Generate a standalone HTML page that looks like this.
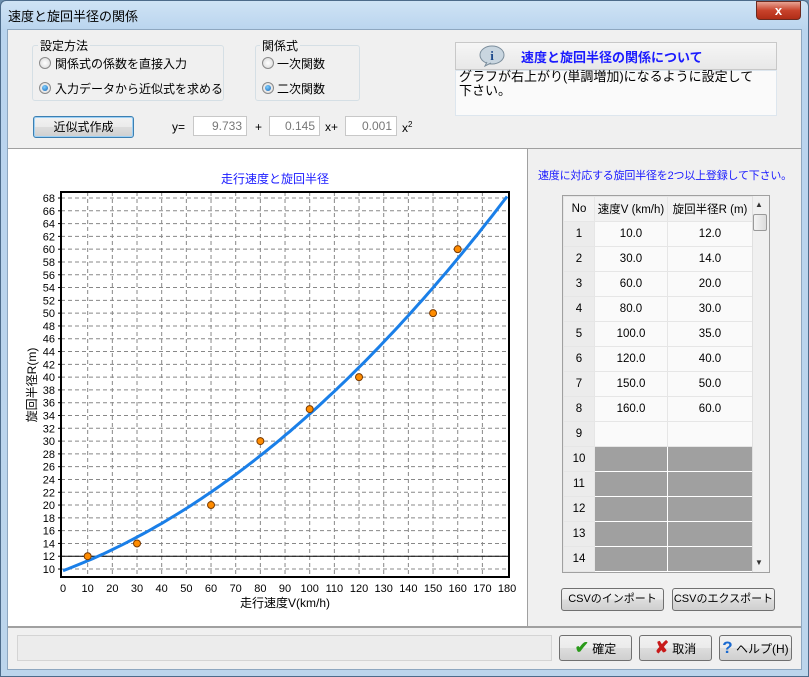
<!DOCTYPE html>
<html><head><meta charset="utf-8">
<style>
*{box-sizing:border-box;margin:0;padding:0}
body{width:809px;height:677px;overflow:hidden;background:#6d8fae;font-family:"Liberation Sans","Noto Sans CJK JP",sans-serif;font-size:12px;color:#000;position:relative}
.abs{position:absolute}
#win{left:0;top:0;width:809px;height:677px;background:linear-gradient(#cfe3f5,#b9d4ee 30px,#bcd5ec);border:1px solid #4d6b8a;border-radius:6px 6px 0 0}
#title{left:8px;top:6px;font-size:13px;color:#000}
#close{left:756px;top:1px;width:45px;height:19px;background:linear-gradient(#e8a394,#c8422b 50%,#b02d17);border:1px solid #6b2a20;border-radius:0 0 4px 4px;color:#fff;font-weight:bold;text-align:center;line-height:17px;font-size:13px}
#body{left:7px;top:29px;width:795px;height:641px;background:#f0f0f0;border:1px solid #8ea7c0}
.grp{border:1px solid #d5dfe5;border-radius:3px}
.lbl{font-size:12px}
.radio{width:12px;height:12px;border-radius:50%;border:1px solid #8a8a8a;background:radial-gradient(#fff,#d6d6d6)}
.radio.on::after{content:"";position:absolute;left:2px;top:2px;width:6px;height:6px;border-radius:50%;background:radial-gradient(circle at 40% 35%,#7fd0ff,#1663b5)}
.btn{border:1px solid #707070;border-radius:3px;background:linear-gradient(#f2f2f2,#ebebeb 50%,#dddddd 51%,#cfcfcf);text-align:center;font-size:12px}
.inp{background:#fff;border:1px solid #c8c8c8;text-align:right;color:#777;padding-right:4px;line-height:18px}
table{border-collapse:collapse}
td{height:25px;text-align:center;font-size:11.5px;border:1px solid #e6e6e6}
</style></head><body>
<div id="win" class="abs"></div>
<div id="title" class="abs">速度と旋回半径の関係</div>
<div id="close" class="abs">x</div>
<div id="body" class="abs"></div>

<div class="abs grp" style="left:32px;top:45px;width:192px;height:56px"></div>
<div class="abs lbl" style="left:38px;top:37px;background:#f0f0f0;padding:0 2px">設定方法</div>
<div class="abs radio" style="left:39px;top:57px"></div>
<div class="abs lbl" style="left:55px;top:55px">関係式の係数を直接入力</div>
<div class="abs radio on" style="left:39px;top:82px"></div>
<div class="abs lbl" style="left:55px;top:80px">入力データから近似式を求める</div>

<div class="abs grp" style="left:255px;top:45px;width:105px;height:56px"></div>
<div class="abs lbl" style="left:260px;top:37px;background:#f0f0f0;padding:0 2px">関係式</div>
<div class="abs radio" style="left:262px;top:57px"></div>
<div class="abs lbl" style="left:277px;top:55px">一次関数</div>
<div class="abs radio on" style="left:262px;top:82px"></div>
<div class="abs lbl" style="left:277px;top:80px">二次関数</div>

<div class="abs btn" style="left:33px;top:116px;width:101px;height:22px;line-height:20px;border-color:#3c7fb1;box-shadow:inset 0 0 0 1px #9cd0f5">近似式作成</div>
<div class="abs lbl" style="left:172px;top:120px">y=</div>
<div class="abs inp" style="left:193px;top:116px;width:54px;height:20px">9.733</div>
<div class="abs lbl" style="left:255px;top:120px">+</div>
<div class="abs inp" style="left:269px;top:116px;width:51px;height:20px">0.145</div>
<div class="abs lbl" style="left:325px;top:120px">x+</div>
<div class="abs inp" style="left:345px;top:116px;width:52px;height:20px">0.001</div>
<div class="abs lbl" style="left:402px;top:120px">x<sup style="font-size:8px">2</sup></div>

<div class="abs" style="left:455px;top:42px;width:322px;height:28px;background:linear-gradient(#f6f6f6,#e8e8e8);border:1px solid #c8c8c8"></div>
<svg class="abs" style="left:479px;top:45px" width="26" height="22"><ellipse cx="13" cy="10" rx="12" ry="9" fill="#c9d6e0" stroke="#7c8e9c"/><path d="M8 17 L6 21 L12 18" fill="#c9d6e0" stroke="#7c8e9c"/><text x="13" y="15" text-anchor="middle" font-size="13" font-weight="bold" fill="#1e4a8c" font-family="Liberation Serif">i</text></svg>
<div class="abs" style="left:521px;top:47px;color:#1a1aff;font-weight:bold;font-size:13px">速度と旋回半径の関係について</div>
<div class="abs" style="left:455px;top:70px;width:322px;height:46px;background:#fafafa;border:1px solid #dde6ee"></div>
<div class="abs" style="left:459px;top:70px;width:306px;font-size:13px;line-height:14px">グラフが右上がり(単調増加)になるように設定して下さい。</div>

<div class="abs" style="left:8px;top:148px;width:520px;height:479px;background:#fff;border-top:1px solid #a0a0a0;border-right:1px solid #a0a0a0"></div>
<div class="abs" style="left:528px;top:148px;width:273px;height:479px;background:#f0f0f0;border-top:1px solid #a0a0a0"></div>
<div class="abs" style="left:8px;top:626px;width:793px;height:2px;background:#a0a0a0"></div>

<svg id="ch" class="abs" style="left:0;top:0" width="530" height="626"></svg>

<div class="abs" style="left:538px;top:167px;color:#1a1aff;font-size:11px;letter-spacing:-0.2px">速度に対応する旋回半径を2つ以上登録して下さい。</div>
<div class="abs" style="left:562px;top:195px;width:208px;height:378px;border:1px solid #a0a0a0;background:#f4f4f4;overflow:hidden">
<table id="tb" style="width:189px;table-layout:fixed"><colgroup><col style="width:31px"><col style="width:73px"><col style="width:85px"></colgroup></table>
<div class="abs" style="left:189px;top:0;width:17px;height:376px;background:#f0f0f0;border-left:1px solid #e0e0e0"></div>
<div class="abs" style="left:192px;top:4px;font-size:8px;color:#333">▲</div>
<div class="abs" style="left:190px;top:18px;width:14px;height:17px;border:1px solid #999;border-radius:2px;background:linear-gradient(90deg,#f4f4f4,#dcdcdc)"></div>
<div class="abs" style="left:192px;top:362px;font-size:8px;color:#333">▼</div>
</div>

<div class="abs btn" style="left:561px;top:588px;width:103px;height:23px;line-height:21px;font-size:11px">CSVのインポート</div>
<div class="abs btn" style="left:672px;top:588px;width:103px;height:23px;line-height:21px;font-size:11px">CSVのエクスポート</div>

<div class="abs" style="left:17px;top:635px;width:535px;height:26px;border:1px solid #d4d4d4;background:#ececec"></div>
<div class="abs btn" style="left:559px;top:635px;width:73px;height:26px;line-height:24px"><span style="color:#2a9a1a;font-weight:bold;font-size:17px">✔</span> 確定</div>
<div class="abs btn" style="left:639px;top:635px;width:73px;height:26px;line-height:24px"><span style="color:#c81a1a;font-weight:bold;font-size:17px">✘</span> 取消</div>
<div class="abs btn" style="left:719px;top:635px;width:73px;height:26px;line-height:24px"><span style="color:#1a6ad0;font-weight:bold;font-size:17px">?</span> ヘルプ(H)</div>

<script>
var s='',L=61,R=509,T=192,B=577;
function X(v){return 63+v*2.467}
function Y(v){return 198+(68-v)*6.397}
s+='<text x="275" y="183" text-anchor="middle" font-size="12" fill="#1a1aff">走行速度と旋回半径</text>';
for(var v=10;v<=68;v+=2){var y=Y(v);s+='<line x1="'+L+'" x2="'+R+'" y1="'+y+'" y2="'+y+'" stroke="#888" stroke-dasharray="4,3"/>';s+='<text x="55" y="'+(y+4)+'" text-anchor="end" font-size="11" font-family="Liberation Sans Narrow,Liberation Sans">'+v+'</text>';s+='<line x1="'+(L-3)+'" x2="'+L+'" y1="'+y+'" y2="'+y+'" stroke="#000"/>';}
for(var v=0;v<=180;v+=10){var x=X(v);if(v>0&&v<180)s+='<line x1="'+x+'" x2="'+x+'" y1="'+T+'" y2="'+B+'" stroke="#888" stroke-dasharray="4,3"/>';s+='<text x="'+x+'" y="592" text-anchor="middle" font-size="11" font-family="Liberation Sans Narrow,Liberation Sans">'+v+'</text>';}
s+='<line x1="'+L+'" x2="'+R+'" y1="'+Y(12)+'" y2="'+Y(12)+'" stroke="#000"/>';
s+='<rect x="'+L+'" y="'+T+'" width="'+(R-L)+'" height="'+(B-T)+'" fill="none" stroke="#000" stroke-width="2"/>';
var p='';for(var v=0;v<=180;v+=2){var r=9.733+0.145*v+0.001*v*v;p+=(v?'L':'M')+X(v).toFixed(1)+' '+Y(r).toFixed(1);}
s+='<path d="'+p+'" fill="none" stroke="#1a7fe8" stroke-width="3"/>';
[[10,12],[30,14],[60,20],[80,30],[100,35],[120,40],[150,50],[160,60]].forEach(function(d){s+='<circle cx="'+X(d[0])+'" cy="'+Y(d[1])+'" r="3.5" fill="#ff8c00" stroke="#7a3a00"/>';});
s+='<text x="285" y="607" text-anchor="middle" font-size="12">走行速度V(km/h)</text>';
s+='<text transform="translate(36,385) rotate(-90)" text-anchor="middle" font-size="12">旋回半径R(m)</text>';
document.getElementById('ch').innerHTML=s;
var d=[['10.0','12.0'],['30.0','14.0'],['60.0','20.0'],['80.0','30.0'],['100.0','35.0'],['120.0','40.0'],['150.0','50.0'],['160.0','60.0'],['','']];
var h='<tr><td style="background:#f2f2f2">No</td><td style="background:#f2f2f2">速度V (km/h)</td><td style="background:#f2f2f2">旋回半径R (m)</td></tr>';
for(var i=1;i<=14;i++){var g=i>9;h+='<tr><td style="background:#ececec">'+i+'</td><td style="background:'+(g?'#a0a0a0':'#fafafa')+';border-color:'+(g?'#fff':'#e6e6e6')+'">'+(g?'':d[i-1][0])+'</td><td style="background:'+(g?'#a0a0a0':'#fafafa')+';border-color:'+(g?'#fff':'#e6e6e6')+'">'+(g?'':d[i-1][1])+'</td></tr>';}
document.getElementById('tb').insertAdjacentHTML('beforeend',h);
</script>
</body></html>
